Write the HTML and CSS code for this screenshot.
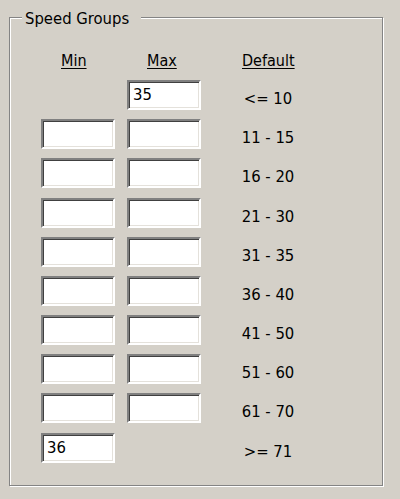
FILE: index.html
```html
<!DOCTYPE html>
<html>
<head>
<meta charset="utf-8">
<link rel="stylesheet" href="styles.css">
</head>
<body>
<div class="group">
  <div class="title">Speed Groups</div>
  <div class="grid">
    <div class="head">Min</div>
    <div class="head">Max</div>
    <div class="head head-default">Default</div>

    <div class="empty"></div>
    <input class="field" type="text" value="35">
    <div class="label">&lt;= 10</div>

    <input class="field" type="text" value="">
    <input class="field" type="text" value="">
    <div class="label">11 - 15</div>

    <input class="field" type="text" value="">
    <input class="field" type="text" value="">
    <div class="label">16 - 20</div>

    <input class="field" type="text" value="">
    <input class="field" type="text" value="">
    <div class="label">21 - 30</div>

    <input class="field" type="text" value="">
    <input class="field" type="text" value="">
    <div class="label">31 - 35</div>

    <input class="field" type="text" value="">
    <input class="field" type="text" value="">
    <div class="label">36 - 40</div>

    <input class="field" type="text" value="">
    <input class="field" type="text" value="">
    <div class="label">41 - 50</div>

    <input class="field" type="text" value="">
    <input class="field" type="text" value="">
    <div class="label">51 - 60</div>

    <input class="field" type="text" value="">
    <input class="field" type="text" value="">
    <div class="label">61 - 70</div>

    <input class="field" type="text" value="36">
    <div class="empty"></div>
    <div class="label">&gt;= 71</div>
  </div>
</div>
</body>
</html>
```
FILE: styles.css
```css
html, body {
  margin: 0;
  padding: 0;
  background: #d4d0c8;
}
body {
  width: 400px;
  height: 499px;
  overflow: hidden;
  font-family: "DejaVu Sans Condensed", "DejaVu Sans", sans-serif;
  color: #000;
}
.group {
  margin: 17px 0 0 9px;
  width: 374px;
  height: 469px;
  box-sizing: border-box;
  border: 1px solid #848484;
  box-shadow: inset 1px 1px #fff, 1px 1px #fff;
  padding-left: 31px;
}
.title {
  width: fit-content;
  margin: -8px 0 0 -19px;
  padding: 0 12px 0 3px;
  background: #d4d0c8;
  font-size: 16.5px;
  line-height: 18px;
}
.grid {
  margin-top: 22.8px;
  display: grid;
  grid-template-columns: 74px 74px 110px;
  grid-template-rows: 20px repeat(10, 30px);
  column-gap: 12px;
  row-gap: 9.2px;
}
.head {
  font-size: 16px;
  line-height: 20px;
  padding-left: 20px;
  text-decoration: underline;
  text-underline-offset: 2px;
}
.head-default {
  padding-left: 29px;
}
.field {
  width: 74px;
  height: 30px;
  box-sizing: border-box;
  margin: 0;
  padding: 0 0 0 4px;
  border: 2px solid;
  border-color: #808080 #fff #fff #808080;
  box-shadow: inset 1px 1px #404040, inset -1px -1px #e4e1db;
  background: #fff;
  font-family: "DejaVu Sans Condensed", "DejaVu Sans", sans-serif;
  font-size: 16.5px;
  color: #000;
  outline: none;
}
.label {
  font-size: 16.5px;
  line-height: 30px;
  padding-top: 4px;
  text-align: center;
}
```
